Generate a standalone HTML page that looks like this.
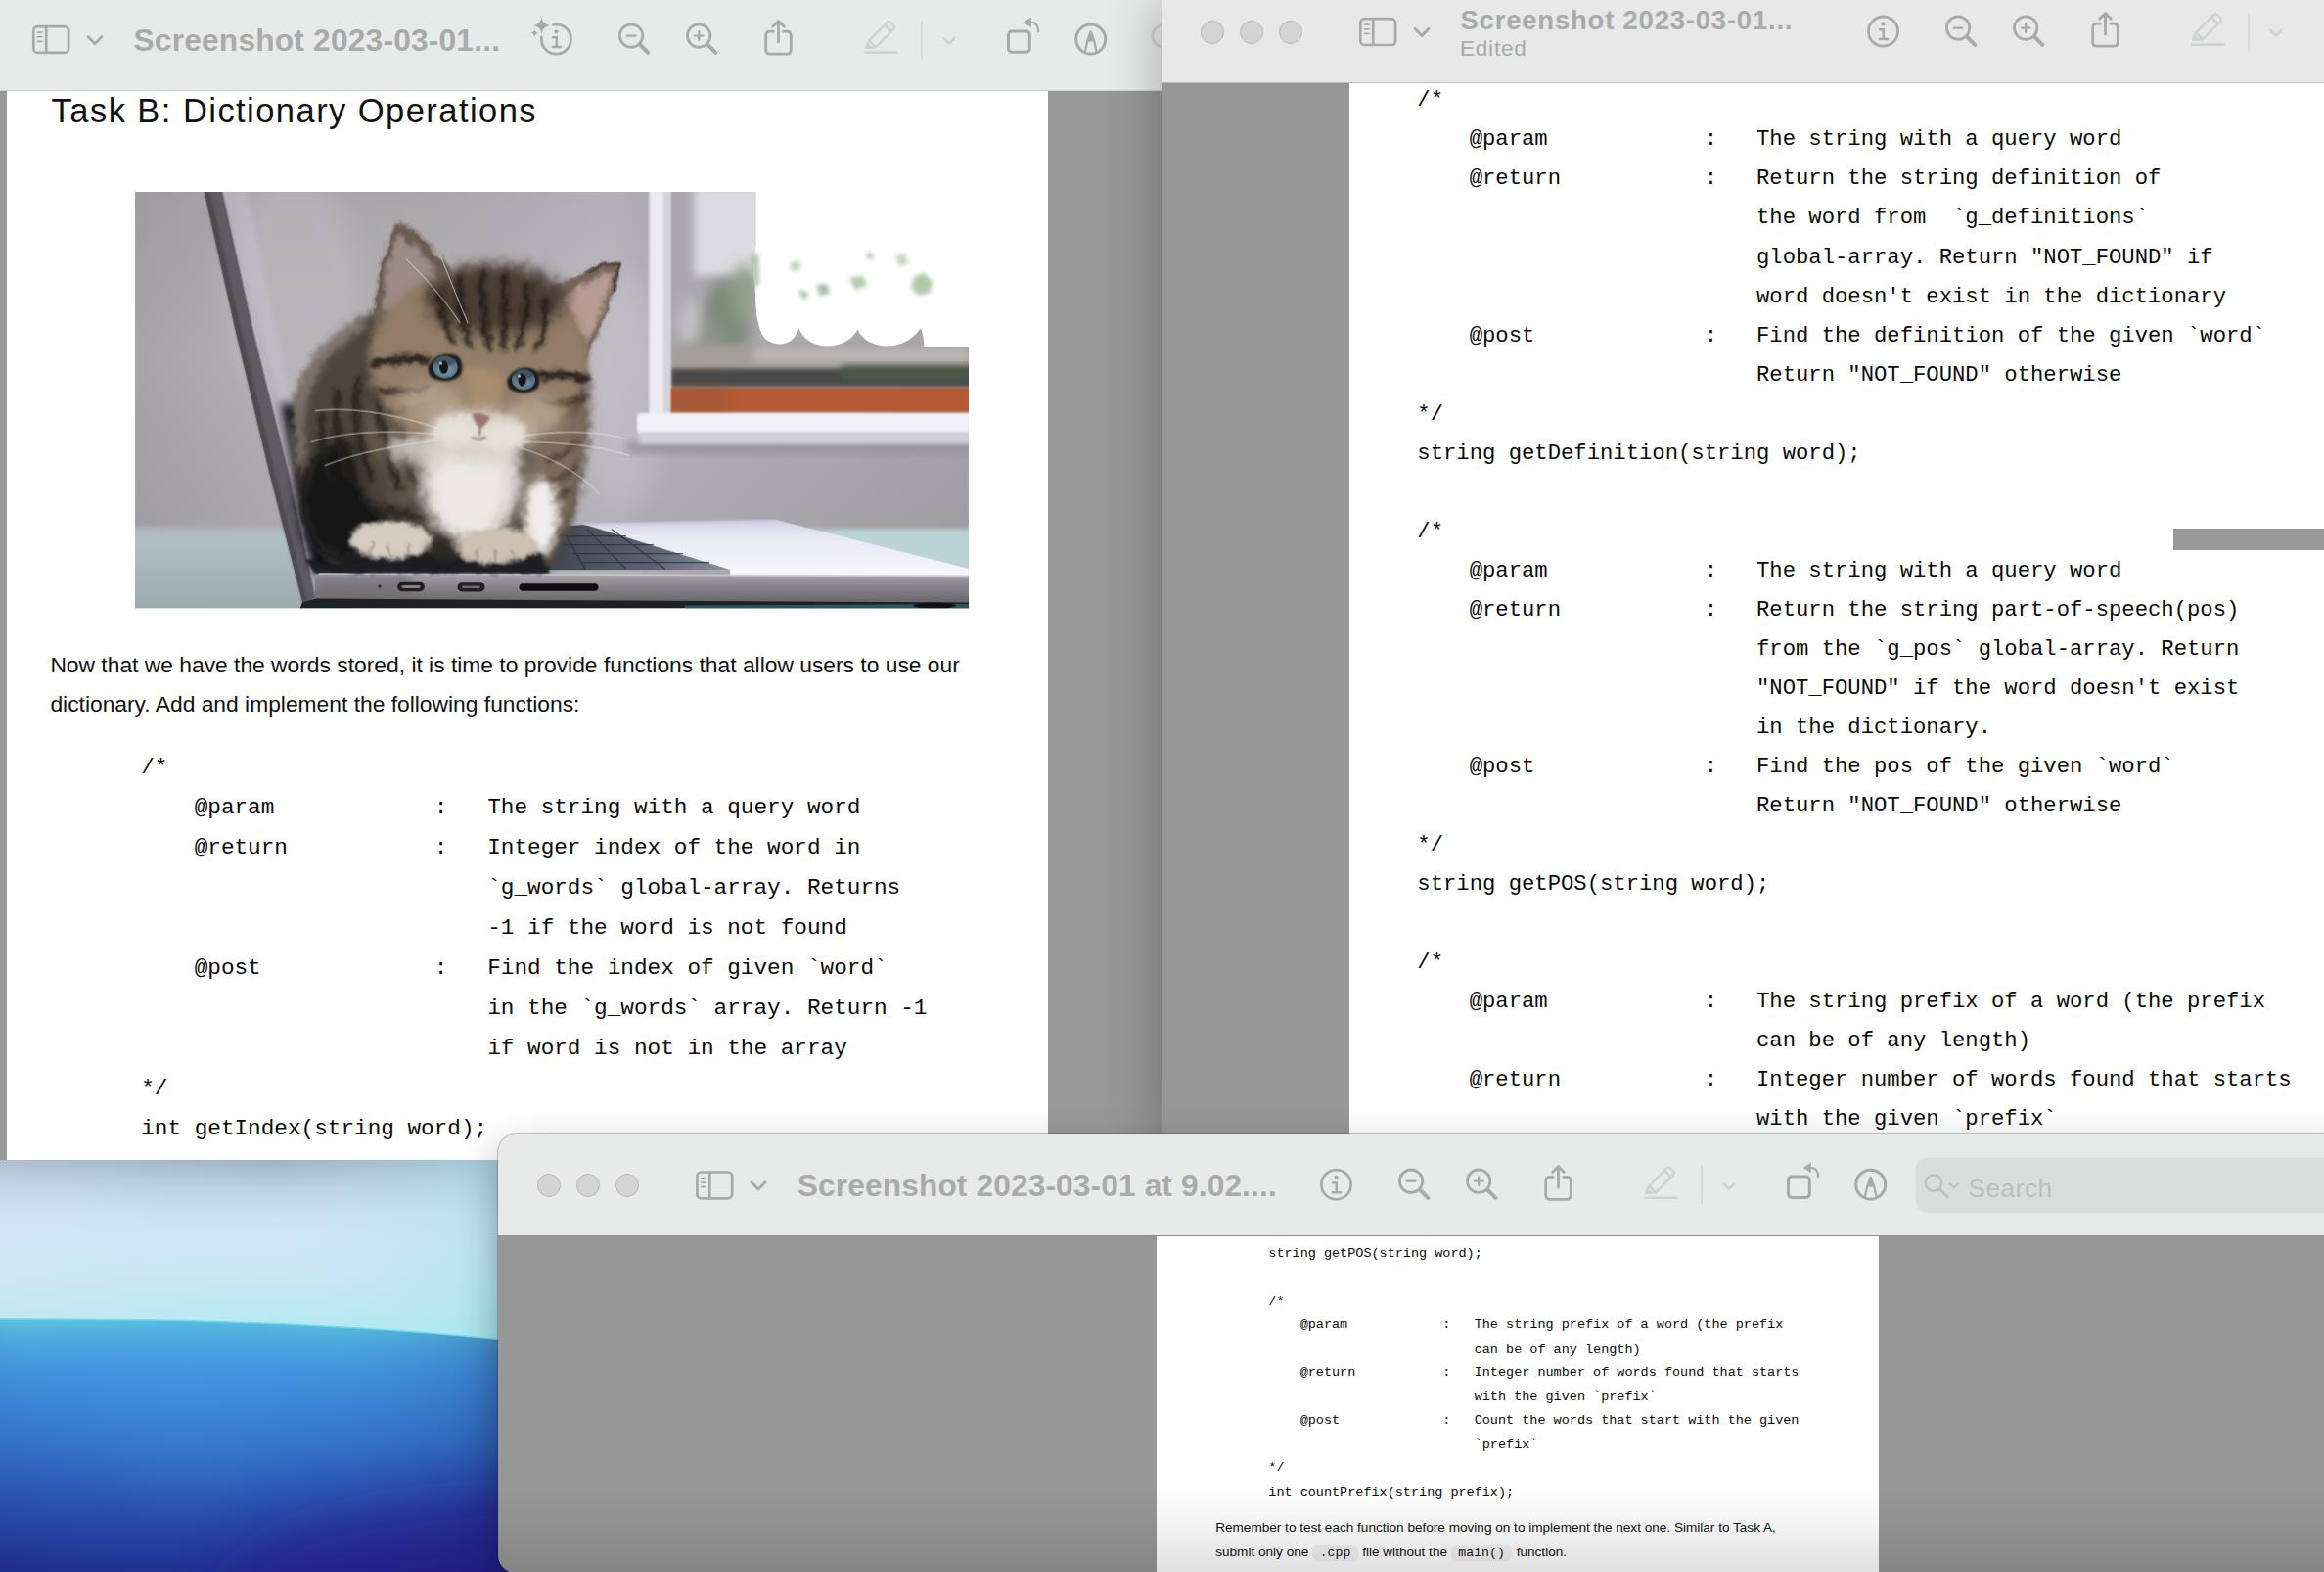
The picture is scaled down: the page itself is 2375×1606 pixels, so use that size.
<!DOCTYPE html>
<html>
<head>
<meta charset="utf-8">
<title>Preview windows</title>
<style>
*{margin:0;padding:0;box-sizing:border-box;}
html,body{width:2375px;height:1606px;overflow:hidden;background:#999;}
body{position:relative;font-family:"Liberation Sans",sans-serif;}
.abs{position:absolute;}
/* ---------- wallpaper ---------- */
#wall{left:0;top:1185px;width:520px;height:421px;overflow:hidden;}
/* ---------- windows ---------- */
.win{position:absolute;overflow:hidden;}
.tb{position:absolute;left:0;top:0;right:0;}
.ttl{position:absolute;white-space:nowrap;font-weight:bold;color:#a9abaa;}
pre.code{position:absolute;font-family:"Liberation Mono",monospace;color:#0a0a0a;white-space:pre;}
.para{position:absolute;color:#111;white-space:nowrap;}
svg.ic{position:absolute;overflow:visible;}
/* window 1 */
#w1{left:0;top:0;width:1200px;height:1185px;background:#989898;}
#w1 .tb{height:93px;background:#e8eae9;border-bottom:1px solid #cfd1d0;}
#w1 .page{position:absolute;left:7px;top:93px;width:1064px;height:1092px;background:#fff;}
#w1 pre.code{font-size:22.7px;line-height:40.9px;}
/* window 2 */
#w2{left:1187px;top:0;width:1188px;height:1165px;background:#979797;box-shadow:0 0 52px 0 rgba(0,0,0,.30);}
#w2 .tb{height:85px;background:#e8e8e8;border-bottom:1.5px solid #bdbdbd;}
#w2 .page{position:absolute;left:192px;top:85px;right:0;bottom:0;background:#fff;}
#w2 pre.code{font-size:22.23px;line-height:40.03px;}
/* window 3 */
#w3{left:509px;top:1159px;width:1900px;height:448px;background:#979797;border-radius:18px;
  box-shadow:0 0 0 1px rgba(0,0,0,.20),0 16px 42px 0 rgba(0,0,0,.32);}
#w3 .tb{height:104px;background:#e8eae9;border-bottom:1.5px solid #8e8e8e;}
#w3 .page{position:absolute;left:673px;top:104px;width:738px;bottom:0;background:#fff;}
#w3 pre.code{font-size:13.49px;line-height:24.35px;}
.kbd{font-family:"Liberation Mono",monospace;font-size:13.2px;background:#f3f3f3;border-radius:5px;padding:1px 7.6px;margin:0 .5px 0 0;}
.tl{position:absolute;width:24px;height:24px;border-radius:50%;background:#d3d4d3;border:1px solid #b7b8b7;}
</style>
</head>
<body>


<svg width="0" height="0" style="position:absolute;left:0;top:0">
<defs>
  <!-- sidebar toggle, centred on 0,0 -->
  <g id="i-side" fill="none" stroke="#a8aaa9" stroke-width="2.7" stroke-linecap="round">
    <rect x="-17.9" y="-13.4" width="35.8" height="26.8" rx="4.2"/>
    <line x1="-5" y1="-13.4" x2="-5" y2="13.4" stroke-linecap="butt"/>
    <g stroke-width="1.7"><line x1="-13.6" y1="-7.4" x2="-9.2" y2="-7.4"/><line x1="-13.6" y1="-2.8" x2="-9.2" y2="-2.8"/><line x1="-13.6" y1="1.8" x2="-9.2" y2="1.8"/></g>
  </g>
  <path id="i-chev" d="M-6.9,-3.4 L0,3.6 L6.9,-3.4" fill="none" stroke-width="3" stroke-linecap="round" stroke-linejoin="round"/>
  <!-- the letter i used inside info circle -->
  <g id="i-i" stroke="#a8aaa9" fill="none" stroke-width="2.5" stroke-linecap="round">
    <circle cx="0" cy="-7.7" r="2.1" fill="#a8aaa9" stroke="none"/>
    <path d="M-3.4,-1.8 L0.3,-1.8 L0.3,7.8 M-3.8,8 L4.6,8"/>
  </g>
  <!-- plain info -->
  <g id="i-info"><circle r="15.1" fill="none" stroke="#a8aaa9" stroke-width="2.8"/><use href="#i-i"/></g>
  <!-- info with sparkles (open arc) -->
  <g id="i-infos">
    <path d="M-3.2,-14.8 A15.1,15.1 0 1 1 -15,-2.2" fill="none" stroke="#a8aaa9" stroke-width="2.8" stroke-linecap="round"/>
    <use href="#i-i"/>
    <path d="M-15,-22.9 Q-14,-15.3 -6.3,-14.2 Q-14,-13.2 -15,-5.6 Q-16,-13.2 -23.6,-14.2 Q-16,-15.3 -15,-22.9Z" fill="#a8aaa9"/>
    <path d="M-22.1,-10.6 Q-21.6,-6.9 -17.9,-6.4 Q-21.6,-5.9 -22.1,-2.2 Q-22.6,-5.9 -26.3,-6.4 Q-22.6,-6.9 -22.1,-10.6Z" fill="#a8aaa9"/>
  </g>
  <!-- magnifier minus / plus, centred on lens -->
  <g id="i-mag" fill="none" stroke="#a8aaa9" stroke-linecap="round">
    <circle r="11.7" stroke-width="2.8"/>
    <line x1="9" y1="9" x2="17.2" y2="17.2" stroke-width="4"/>
    <line x1="-4.4" y1="0" x2="4.4" y2="0" stroke-width="2.3"/>
  </g>
  <g id="i-magp"><use href="#i-mag"/><line x1="0" y1="-4.4" x2="0" y2="4.4" stroke="#a8aaa9" stroke-width="2.3" stroke-linecap="round"/></g>
  <!-- share: origin = arrow x, box centre y -->
  <g id="i-share" fill="none" stroke="#a8aaa9" stroke-width="2.8" stroke-linecap="round" stroke-linejoin="round">
    <path d="M-5.2,-11.5 L-8.6,-11.5 Q-12.8,-11.5 -12.8,-7.3 L-12.8,7.3 Q-12.8,11.5 -8.6,11.5 L8.6,11.5 Q12.8,11.5 12.8,7.3 L12.8,-7.3 Q12.8,-11.5 8.6,-11.5 L5.2,-11.5"/>
    <path d="M0,-0.8 L0,-21.6 M-5.8,-16.4 L0,-22.2 L5.8,-16.4"/>
  </g>
  <!-- highlighter pencil (light) : origin = underline centre -->
  <g id="i-pen" fill="none" stroke="#d0d2d1" stroke-width="2.4" stroke-linecap="round" stroke-linejoin="round">
    <line x1="-16" y1="0" x2="16" y2="0" stroke-width="2.6"/>
    <path d="M-11.9,-12.1 L6.2,-30.4 Q8,-32.2 9.8,-30.4 L13,-27.2 Q14.8,-25.4 13,-23.6 L-5.1,-5.4 Z"/>
    <path d="M-11.9,-12.1 L-14.8,-4.9 L-5.1,-5.4"/>
    <path d="M3.9,-28 L10.7,-21.2"/>
    <path d="M-15.2,-4.8 L-13.6,-8.6 L-10.4,-5.4Z" fill="#d0d2d1"/>
  </g>
  <!-- rotate : origin = square centre -->
  <g id="i-rot" fill="none" stroke="#a8aaa9" stroke-linecap="round" stroke-linejoin="round">
    <rect x="-10.9" y="-10.6" width="21.8" height="21.3" rx="3.6" stroke-width="3"/>
    <path d="M19.7,-10.4 Q19.7,-19.9 11.7,-19.9" stroke-width="2.2"/>
    <path d="M5.5,-20 L11.9,-24.4 L11.9,-15.6Z" fill="#a8aaa9" stroke-width="1"/>
  </g>
  <!-- markup -->
  <g id="i-mark" fill="none" stroke="#a8aaa9" stroke-linecap="round" stroke-linejoin="round">
    <circle r="15" stroke-width="3"/>
    <path d="M-5.9,12.6 L-3.4,1.6 L0,-7.4 L3.4,1.6 L5.9,12.6" stroke-width="2.3"/>
    <path d="M0,-7.8 L3.8,1.9 L-3.8,1.9Z" fill="#a8aaa9" stroke-width="1"/>
  </g>
  <!-- right-hand cluster of icons relative to info centre -->
  <g id="grp-a">
    <use href="#i-mag" x="76.6" y="-3.5"/>
    <use href="#i-magp" x="145.7" y="-3.5"/>
    <use href="#i-share" x="227" y="3.6"/>
    <use href="#i-pen" x="331.6" y="13.5"/>
    <line x1="373.4" y1="-19" x2="373.4" y2="20.6" stroke="#d4d6d5" stroke-width="1.6"/>
    <path d="M396,-1 L401.4,4.4 L406.8,-1" fill="none" stroke="#cfd1d0" stroke-width="2.6" stroke-linecap="round" stroke-linejoin="round"/>
  </g>
  <g id="grp-b">
    <use href="#i-rot" x="472.9" y="2.5"/>
    <use href="#i-mark" x="546.2" y="0"/>
  </g>
</defs>
</svg>

<!-- WALLPAPER -->
<div id="wall" class="abs">
<svg width="520" height="421" viewBox="0 1185 520 421" style="position:absolute;left:0;top:0">
  <defs>
    <linearGradient id="g-sky" gradientUnits="userSpaceOnUse" x1="0" y1="1185" x2="0" y2="1370">
      <stop offset="0" stop-color="#9db1c2"/><stop offset=".05" stop-color="#a9bdce"/><stop offset=".16" stop-color="#bbd1e4"/>
      <stop offset=".30" stop-color="#cbe1f3"/><stop offset=".45" stop-color="#cfe6f7"/><stop offset=".65" stop-color="#c8e7f3"/>
      <stop offset=".85" stop-color="#bce9f2"/><stop offset="1" stop-color="#aeeaf2"/>
    </linearGradient>
    <linearGradient id="g-sea" gradientUnits="userSpaceOnUse" x1="0" y1="1347" x2="0" y2="1606">
      <stop offset="0" stop-color="#5fcde3"/><stop offset=".035" stop-color="#57bddb"/><stop offset=".11" stop-color="#4aa5dc"/>
      <stop offset=".21" stop-color="#4092dc"/><stop offset=".33" stop-color="#3a83d2"/><stop offset=".48" stop-color="#3370c6"/>
      <stop offset=".63" stop-color="#2b59b5"/><stop offset=".78" stop-color="#2443a2"/><stop offset=".90" stop-color="#1f3394"/>
      <stop offset="1" stop-color="#1b2689"/>
    </linearGradient>
    <filter id="wb" x="-50%" y="-50%" width="200%" height="200%"><feGaussianBlur stdDeviation="28"/></filter>
    <radialGradient id="g-glow" gradientUnits="userSpaceOnUse" cx="190" cy="1400" r="330">
      <stop offset="0" stop-color="#4a9cea" stop-opacity=".35"/><stop offset=".5" stop-color="#4a9cea" stop-opacity=".1"/><stop offset="1" stop-color="#182070" stop-opacity=".22"/>
    </radialGradient>
    <linearGradient id="g-skyx" gradientUnits="userSpaceOnUse" x1="0" y1="0" x2="520" y2="0">
      <stop offset="0" stop-color="#dfe6f6" stop-opacity=".25"/><stop offset=".55" stop-color="#c8e8f2" stop-opacity="0"/><stop offset="1" stop-color="#a2e0ee" stop-opacity=".55"/>
    </linearGradient>
  </defs>
  <rect x="0" y="1185" width="520" height="200" fill="url(#g-sky)"/>
  <rect x="0" y="1185" width="520" height="200" fill="url(#g-skyx)"/>
  <path id="seapath" d="M0,1348 C150,1347.5 330,1350 520,1369.5 L520,1606 L0,1606Z" fill="url(#g-sea)"/>
  <path d="M0,1348 C150,1347.5 330,1350 520,1369.5 L520,1606 L0,1606Z" fill="url(#g-glow)"/>
  <path d="M0,1348 C150,1347.5 330,1350 520,1369.5" fill="none" stroke="#6fdcec" stroke-width="1.6"/>
  <ellipse cx="530" cy="1625" rx="300" ry="95" fill="#2a1886" opacity=".5" filter="url(#wb)"/>
</svg>
</div>

<!-- WINDOW 1 -->
<div id="w1" class="win">
  <div class="page" id="p1"></div>
  <!--KIT-START--><svg id="kit" class="abs" style="left:138px;top:196.4px" width="852" height="425.2" viewBox="138 196.4 852 425.2">
<defs>
  <filter id="b1" x="-20%" y="-20%" width="140%" height="140%"><feGaussianBlur stdDeviation="1.2"/></filter>
  <filter id="b2" x="-20%" y="-20%" width="140%" height="140%"><feGaussianBlur stdDeviation="2.2"/></filter>
  <filter id="b4" x="-30%" y="-30%" width="160%" height="160%"><feGaussianBlur stdDeviation="4"/></filter>
  <filter id="b7" x="-40%" y="-40%" width="180%" height="180%"><feGaussianBlur stdDeviation="7"/></filter>
  <filter id="b12" x="-50%" y="-50%" width="200%" height="200%"><feGaussianBlur stdDeviation="12"/></filter>
  <linearGradient id="k-wall" gradientUnits="userSpaceOnUse" x1="138" y1="0" x2="990" y2="0">
    <stop offset="0" stop-color="#a5a2a5"/><stop offset=".16" stop-color="#b0adb1"/><stop offset=".36" stop-color="#b1aeb2"/>
    <stop offset=".57" stop-color="#bab7bd"/><stop offset=".62" stop-color="#b2afb5"/><stop offset="1" stop-color="#a4a1a7"/>
  </linearGradient>
  <linearGradient id="k-wallv" gradientUnits="userSpaceOnUse" x1="0" y1="196" x2="0" y2="540">
    <stop offset="0" stop-color="#000" stop-opacity=".04"/><stop offset=".5" stop-color="#fff" stop-opacity=".03"/><stop offset="1" stop-color="#000" stop-opacity=".03"/>
  </linearGradient>
  <linearGradient id="k-tab" gradientUnits="userSpaceOnUse" x1="0" y1="536" x2="0" y2="622">
    <stop offset="0" stop-color="#a8adae"/><stop offset=".14" stop-color="#b2bfc0"/><stop offset=".35" stop-color="#aebbbc"/>
    <stop offset=".7" stop-color="#a5b2b2"/><stop offset="1" stop-color="#9eabab"/>
  </linearGradient>
  <linearGradient id="k-lid" gradientUnits="userSpaceOnUse" x1="208" y1="0" x2="228" y2="-5">
    <stop offset="0" stop-color="#4b484c"/><stop offset=".5" stop-color="#67646a"/><stop offset="1" stop-color="#716e74"/>
  </linearGradient>
  <linearGradient id="k-side" gradientUnits="userSpaceOnUse" x1="0" y1="588" x2="0" y2="616">
    <stop offset="0" stop-color="#a5a2a8"/><stop offset=".35" stop-color="#8b888e"/><stop offset="1" stop-color="#68656b"/>
  </linearGradient>
  <linearGradient id="k-kbd" gradientUnits="userSpaceOnUse" x1="540" y1="0" x2="745" y2="0">
    <stop offset="0" stop-color="#3c404a"/><stop offset=".6" stop-color="#5b6170"/><stop offset="1" stop-color="#8a91a2"/>
  </linearGradient>
  <linearGradient id="k-palm" gradientUnits="userSpaceOnUse" x1="0" y1="531" x2="0" y2="590">
    <stop offset="0" stop-color="#cdcddf"/><stop offset=".3" stop-color="#e9e9f4"/><stop offset="1" stop-color="#f7f7fc"/>
  </linearGradient>
  <filter id="fur" x="-10%" y="-10%" width="120%" height="120%"><feTurbulence type="fractalNoise" baseFrequency="0.09" numOctaves="2" seed="4" result="n"/><feDisplacementMap in="SourceGraphic" in2="n" scale="9" xChannelSelector="R" yChannelSelector="G"/></filter>
  <clipPath id="k-clip"><rect x="138" y="196.4" width="852" height="425.2"/></clipPath>
</defs>
<g clip-path="url(#k-clip)">
  <!-- wall -->
  <rect x="138" y="196" width="852" height="426" fill="url(#k-wall)"/>
  <rect x="138" y="196" width="852" height="426" fill="url(#k-wallv)"/>
  <ellipse cx="300" cy="300" rx="70" ry="120" fill="#bebbc0" opacity=".55" filter="url(#b12)"/>
  <ellipse cx="640" cy="400" rx="40" ry="120" fill="#c4c1c7" opacity=".5" filter="url(#b12)"/>
  <!-- table (left) -->
  <rect x="130" y="538" width="230" height="90" fill="url(#k-tab)" filter="url(#b2)"/>
  <!-- table (right) -->
  <path d="M800,541 L1000,541 L1000,592 L860,560Z" fill="#b9d3d7" filter="url(#b2)"/>

  <!-- window -->
  <g>
    <rect x="684" y="190" width="92" height="234" fill="#aaa7ae"/>
    <rect x="709" y="190" width="70" height="92" fill="#dcdce0" filter="url(#b4)"/>
    <g filter="url(#b7)">
      <ellipse cx="742" cy="330" rx="24" ry="44" fill="#7d8a79"/>
      <ellipse cx="722" cy="352" rx="18" ry="28" fill="#8a9488"/>
      <ellipse cx="760" cy="300" rx="12" ry="30" fill="#8fa08a"/>
      <ellipse cx="705" cy="330" rx="10" ry="24" fill="#c3c2c6"/>
    </g>
    <rect x="684" y="352" width="310" height="28" fill="#a49e9b" filter="url(#b4)"/>
    <rect x="770" y="356" width="220" height="14" fill="#bdb8b8" filter="url(#b4)"/>
    <rect x="686" y="377" width="310" height="19" fill="#4a4a48" filter="url(#b2)"/>
    <rect x="860" y="374" width="140" height="14" fill="#4c5a49" filter="url(#b4)"/>
    <rect x="684" y="396.5" width="310" height="25" fill="#b55a32" filter="url(#b1)"/>
    <rect x="684" y="396.5" width="60" height="25" fill="#9a5a40" opacity=".5" filter="url(#b4)"/>
    <!-- frame post -->
    <rect x="663.4" y="190" width="21.4" height="236" fill="#ebeaf0" filter="url(#b1)"/>
    <rect x="678" y="190" width="7" height="232" fill="#d4d2da" filter="url(#b1)"/>
    <!-- sill -->
    <rect x="640" y="452" width="360" height="12" fill="#99969d" filter="url(#b4)"/>
    <rect x="651" y="422.3" width="345" height="21" rx="4" fill="#f1f0f5" filter="url(#b1)"/>
    <rect x="653" y="442" width="343" height="12" rx="3" fill="#d3d1d8" filter="url(#b2)"/>
  </g>

  <!-- laptop lid -->
  <path d="M226.6,194 L252,194 L300,420 L290,424 Z" fill="#c3c0c8" opacity=".55" filter="url(#b2)"/>
  <path d="M208.2,194 L226.8,194 L260.2,344 L295.1,484 L322.5,611 L309.5,617 L275.5,484 L242,344Z" fill="#5f5c61"/>
  <path d="M208.2,194 L214,194 L248,344 L281,484 L314,615 L309.5,617 L275.5,484 L242,344Z" fill="#4a474b" opacity=".8" filter="url(#b1)"/>
  <path d="M226.8,194 L260.2,344 L295.1,484 L322.5,611" fill="none" stroke="#8b888f" stroke-width="1.2" opacity=".8"/>

  <!-- dark screen / shadow behind kitten -->
  <path d="M287,412 L318,418 L350,470 L395,548 L405,580 L330,590 L318,582 Z" fill="#14161c" filter="url(#b4)"/>

  <!-- laptop base -->
  <path d="M540,541 L597,536.5 L746,582.5 L330,583 L318,576 L420,572 Z" fill="url(#k-kbd)"/>
  <path d="M312,572 L556,572 L562,586 L322,586Z" fill="#1b1b21" filter="url(#b1)"/>
  <path d="M597,535.5 L793,531.5 L992,582 L992,590 L746,590 L746,582.5Z" fill="url(#k-palm)"/>
  <path d="M597,536 L793,532" stroke="#c4c4d8" stroke-width="2" filter="url(#b1)"/>
  <g stroke="#2a2d36" stroke-width="1.3" opacity=".75">
    <path d="M566,548 L640,548 M575,557 L668,557 M585,566 L698,566 M596,575 L725,575"/>
    <path d="M600,541 L640,582 M625,541 L680,582 M575,541 L598,582"/>
  </g>
  <path d="M322,587 L992,589.5 L992,617 L322,613Z" fill="url(#k-side)"/>
  <path d="M322,587 L420,587 L420,614 L322,613Z" fill="#6f6c71" opacity=".55" filter="url(#b4)"/>
  <path d="M326,586.5 L992,588.8" stroke="#c9c7cf" stroke-width="1.6" opacity=".9"/>
  <path d="M309,616 L322,612 L992,616 L992,623 L306,623Z" fill="#1c2126"/>
  <path d="M700,619 L992,617.5 L992,623 L700,623Z" fill="#2c6468" opacity=".8"/>
  <ellipse cx="955" cy="619" rx="22" ry="3" fill="#101418"/>
  <!-- ports -->
  <circle cx="388" cy="599.3" r="1.5" fill="#1d1d22"/>
  <rect x="406" y="595.2" width="28" height="9.4" rx="4.7" fill="#1f1f25"/><rect x="410.5" y="598.5" width="19" height="2.8" rx="1.4" fill="#8d7f78"/>
  <rect x="467.5" y="595.6" width="28" height="9.2" rx="4.6" fill="#1f1f25"/><rect x="472" y="598.8" width="19" height="2.6" rx="1.3" fill="#6e6a70"/>
  <rect x="530.5" y="596.6" width="81" height="7.6" rx="3.8" fill="#0e0e12"/>

  <!-- white blown-out window + flowers -->
  <path d="M772.7,194 L992,194 L992,355 L944.5,355 C944,346 943,339 940.5,336 C932,349 918,354 907,354 C891,354 880,346 876.5,337 C870,349 857,354 845.5,354 C831,354 820,346 816.5,336 C812,347 806,352 798,352 C785,352 778.5,345 776,334 C771,320 773,300 770.5,282 C768.5,264 774,252 772.7,246Z" fill="#fff"/>
  <g filter="url(#b2)" opacity=".8">
    <path d="M806,270 L816,266 L819,274 L811,279Z" fill="#b5ccb0"/><path d="M834,292 L845,290 L848,300 L838,303Z" fill="#8fb092"/>
    <path d="M868,284 L882,282 L886,292 L874,297Z" fill="#a3bf9a"/><path d="M916,261 L925,259 L928,270 L918,273Z" fill="#b7cfb0"/>
    <path d="M934,284 L944,279 L953,288 L950,300 L938,302 L931,294Z" fill="#9dbb92"/><path d="M816,296 L826,300 L822,308Z" fill="#82a58a"/>
    <path d="M884,262 L890,258 L893,266Z" fill="#8cab8e"/>
    <path d="M768,262 L775,258 L776,290 L770,296Z" fill="#9fb59c"/>
  </g>

  <!-- ================= KITTEN ================= -->
  <g id="cat"><g filter="url(#fur)">
    <!-- body -->
    <path d="M381,320 C350,333 318,362 305,398 C295,430 300,470 312,520 C320,560 335,578 362,580 L562,580 C582,560 594,500 599,440 C601,400 601,380 596,368 Z" fill="#4e443c" filter="url(#b4)"/>
    <path d="M372,330 C345,345 322,370 310,405 C303,430 304,455 310,480" fill="none" stroke="#9c9086" stroke-width="9" opacity=".75" filter="url(#b4)"/>
    <ellipse cx="352" cy="512" rx="46" ry="62" fill="#121318" filter="url(#b7)"/>
    <ellipse cx="400" cy="465" rx="38" ry="58" fill="#695c50" opacity=".65" filter="url(#b7)"/>
    <g fill="none" stroke="#26201c" stroke-width="6.5" stroke-linecap="round" opacity=".85" filter="url(#b2)">
      <path d="M345,400 C340,430 345,460 356,490"/><path d="M366,388 C360,420 366,455 380,490"/>
      <path d="M388,392 C384,425 392,460 408,500"/><path d="M330,425 C326,445 330,470 338,490"/>
      <path d="M410,440 C412,470 425,500 440,520"/><path d="M395,520 C420,528 440,530 455,528"/>
    </g>
    <!-- right flank under cheek -->
    <path d="M545,430 C575,430 598,420 600,400 C603,450 590,520 565,560 L530,560 Z" fill="#7b6a5b" filter="url(#b4)"/>
    <g fill="none" stroke="#3b3029" stroke-width="5" stroke-linecap="round" opacity=".7" filter="url(#b2)">
      <path d="M560,470 C572,468 582,462 590,452"/><path d="M555,492 C568,492 580,486 588,476"/><path d="M552,515 C562,516 574,510 582,500"/>
    </g>
    <!-- chest + white leg -->
    <ellipse cx="481" cy="492" rx="52" ry="62" fill="#e2ddd8" filter="url(#b7)"/>
    <ellipse cx="478" cy="500" rx="34" ry="46" fill="#ece8e4" filter="url(#b4)"/>
    <ellipse cx="553" cy="528" rx="17" ry="40" fill="#f1eeea" filter="url(#b4)"/>
    <ellipse cx="428" cy="458" rx="34" ry="16" fill="#d8d2cb" opacity=".85" filter="url(#b7)"/>
    <!-- ears -->
    <path d="M380,324 C384,282 394,242 406,226 C426,232 449,258 461,277 L432,332Z" fill="#6b5c53" filter="url(#b1)"/>
    <path d="M391,316 C393,282 401,252 408,239 C424,250 440,268 448,283 L424,326Z" fill="#9d8b88" filter="url(#b2)"/>
    <path d="M381,322 C385,282 395,243 406,227 C420,232 440,250 452,266" fill="none" stroke="#d9d2cc" stroke-width="1.6" opacity=".8" filter="url(#b1)"/>
    <path d="M556,300 C585,281 614,271 632,270 C629,300 613,340 598,370 L568,342Z" fill="#75655a" filter="url(#b1)"/>
    <path d="M574,307 C594,291 614,281 626,279 C622,302 611,330 600,352Z" fill="#b89c93" filter="url(#b2)"/>
    <path d="M600,278 C612,272 624,270 632,270 C631,280 629,290 626,298" fill="none" stroke="#3a302b" stroke-width="3" filter="url(#b1)"/>
    <!-- head -->
    <ellipse cx="489" cy="368" rx="112" ry="93" fill="#917d67" filter="url(#b4)"/>
    <ellipse cx="506" cy="306" rx="72" ry="36" fill="#4a3e34" filter="url(#b7)"/>
    <g fill="none" stroke="#241d19" stroke-width="6" stroke-linecap="round" opacity=".85" filter="url(#b2)">
      <path d="M470,285 C468,305 472,330 480,352"/><path d="M492,280 C492,305 496,330 500,356"/>
      <path d="M515,284 C516,305 516,330 514,356"/><path d="M538,292 C540,312 536,335 528,356"/>
      <path d="M450,300 C450,318 456,338 464,350"/><path d="M556,306 C560,322 556,342 548,358"/>
    </g>
    <!-- cheek stripes -->
    <g fill="none" stroke="#2b231f" stroke-linecap="round" filter="url(#b2)">
      <path d="M382,372 C398,368 418,366 436,368" stroke-width="8"/>
      <path d="M388,398 C404,402 420,402 436,396" stroke-width="6" opacity=".8"/>
      <path d="M396,420 C410,422 424,420 436,414" stroke-width="4" opacity=".6"/>
      <path d="M552,384 C566,382 584,384 600,388" stroke-width="8"/>
      <path d="M556,412 C570,414 584,412 596,406" stroke-width="5" opacity=".7"/>
    </g>
    <!-- light areas of face -->
    <ellipse cx="440" cy="412" rx="34" ry="22" fill="#b7a58f" opacity=".8" filter="url(#b7)"/>
    <ellipse cx="548" cy="424" rx="28" ry="20" fill="#b7a58f" opacity=".8" filter="url(#b7)"/>
    <path d="M474,372 L516,382 L508,428 L480,424Z" fill="#a88d6e" filter="url(#b4)"/>
    <ellipse cx="489" cy="446" rx="54" ry="26" fill="#ddd6cd" filter="url(#b7)"/>
    <ellipse cx="466" cy="440" rx="23" ry="16" fill="#e6e0d9" filter="url(#b4)"/>
    <ellipse cx="514" cy="446" rx="23" ry="16" fill="#e6e0d9" filter="url(#b4)"/>
    </g>
    <!-- eyes -->
    <g>
      <path d="M437,376 C442,364 456,359 467,364 C473,368 474,378 470,384 C462,392 446,391 439,384Z" fill="#1f1b1a" filter="url(#b1)"/>
      <ellipse cx="455" cy="375.5" rx="12.6" ry="11.2" fill="#5d7a8b"/>
      <ellipse cx="455" cy="369" rx="12" ry="5" fill="#2c3a44" opacity=".55" filter="url(#b1)"/>
      <ellipse cx="455" cy="379" rx="9" ry="5" fill="#8aa7b6" opacity=".45" filter="url(#b1)"/>
      <ellipse cx="453.5" cy="375.5" rx="4.4" ry="6.8" fill="#15161a"/>
      <circle cx="450.5" cy="371.5" r="1.6" fill="#dfe8ee" opacity=".8"/>
      <path d="M518,390 C522,378 535,373 546,378 C552,382 553,391 549,397 C541,404 527,403 520,397Z" fill="#1f1b1a" filter="url(#b1)"/>
      <ellipse cx="535" cy="388.5" rx="12" ry="10.4" fill="#587484"/>
      <ellipse cx="535" cy="382.5" rx="11.5" ry="4.6" fill="#2c3a44" opacity=".55" filter="url(#b1)"/>
      <ellipse cx="535" cy="392" rx="8.5" ry="4.6" fill="#86a3b2" opacity=".45" filter="url(#b1)"/>
      <ellipse cx="533.5" cy="388.5" rx="4.2" ry="6.4" fill="#15161a"/>
      <circle cx="530.5" cy="384.5" r="1.5" fill="#dfe8ee" opacity=".8"/>
    </g>
    <!-- nose & mouth -->
    <path d="M482.5,423 C488,421 496,423 501,426.5 C498,432 494,437 490.5,438 C487,435 484,429 482.5,423Z" fill="#9a7871" filter="url(#b1)"/>
    <path d="M490.5,438 L490,445 M483,447 C486,450 492,450 496,447" fill="none" stroke="#6b5650" stroke-width="1.6" stroke-linecap="round" filter="url(#b1)"/>
    <g filter="url(#fur)">
    <!-- paws -->
    <path d="M350,566 L552,566 L560,584 L350,584Z" fill="#1d1d24" filter="url(#b2)"/>
    <ellipse cx="399" cy="552" rx="42" ry="19" fill="#d6ccc1" filter="url(#b2)"/>
    <ellipse cx="506" cy="558" rx="43" ry="18" fill="#cdc1b4" filter="url(#b2)"/>
    <g fill="none" stroke="#8a7a6c" stroke-width="2" stroke-linecap="round" opacity=".7" filter="url(#b1)">
      <path d="M380,556 L378,566 M398,558 L398,568 M416,556 L418,566"/><path d="M488,562 L486,571 M506,563 L506,573 M524,561 L526,570"/>
    </g>
    <ellipse cx="452" cy="562" rx="14" ry="12" fill="#2a2624" filter="url(#b4)"/>
    </g>
    <!-- whiskers -->
    <g fill="none" stroke="#f3f0ec" stroke-width=".9" opacity=".8" stroke-linecap="round">
      <path d="M448,438 C410,425 360,415 322,420"/><path d="M446,444 C405,440 355,440 318,452"/><path d="M448,450 C410,455 365,462 332,476"/>
      <path d="M532,446 C570,440 610,440 641,449"/><path d="M534,452 C572,452 615,456 643,466"/><path d="M532,458 C565,468 595,485 613,506"/>
      <path d="M470,330 C450,300 430,280 415,265"/><path d="M478,330 C465,300 458,280 450,262"/>
    </g>
  </g>
</g>
</svg>
<!--KIT-END-->
  <div class="abs" id="h1" style="left:52.6px;top:91.2px;font-size:34.5px;letter-spacing:1.45px;line-height:44px;color:#111;white-space:nowrap;">Task B: Dictionary Operations</div>
  <div class="para" id="pa1" style="left:51.4px;top:658.5px;font-size:22.82px;line-height:40px;">Now that we have the words stored, it is time to provide functions that allow users to use our<br>dictionary. Add and implement the following functions:</div>
<pre class="code" id="c1" style="left:144.2px;top:764.4px;">/*
    @param            :   The string with a query word
    @return           :   Integer index of the word in
                          `g_words` global-array. Returns
                          -1 if the word is not found
    @post             :   Find the index of given `word`
                          in the `g_words` array. Return -1
                          if word is not in the array
*/
int getIndex(string word);</pre>
  <div class="tb" id="tb1">
    <svg class="ic" style="left:0;top:0" width="1200" height="93">
      <use href="#i-side" x="52.2" y="40.5"/>
      <use href="#i-chev" x="97" y="41.2" stroke="#a8aaa9"/>
      <use href="#i-infos" x="568.5" y="40.1"/>
      <use href="#grp-a" x="568.5" y="40.1"/>
      <use href="#grp-b" x="568.5" y="40.1"/>
      <rect x="1177.8" y="25.6" width="200" height="22.2" rx="11.1" fill="none" stroke="#cfd1d0" stroke-width="2.8"/>
    </svg>
    <div class="ttl" id="t1" style="left:136.5px;top:23px;font-size:31.7px;letter-spacing:.2px;line-height:36px;">Screenshot 2023-03-01...</div>
  </div>
</div>

<!-- WINDOW 2 -->
<div id="w2" class="win">
  <div class="page" id="p2"></div>
<pre class="code" id="c2" style="left:261.3px;top:82.4px;">/*
    @param            :   The string with a query word
    @return           :   Return the string definition of
                          the word from  `g_definitions`
                          global-array. Return "NOT_FOUND" if
                          word doesn't exist in the dictionary
    @post             :   Find the definition of the given `word`
                          Return "NOT_FOUND" otherwise
*/
string getDefinition(string word);

/*
    @param            :   The string with a query word
    @return           :   Return the string part-of-speech(pos)
                          from the `g_pos` global-array. Return
                          "NOT_FOUND" if the word doesn't exist
                          in the dictionary.
    @post             :   Find the pos of the given `word`
                          Return "NOT_FOUND" otherwise
*/
string getPOS(string word);

/*
    @param            :   The string prefix of a word (the prefix
                          can be of any length)
    @return           :   Integer number of words found that starts
                          with the given `prefix`
    @post             :   Count the words that start with the given</pre>
  <div class="abs" style="left:1034px;top:540px;width:160px;height:22px;background:#999;"></div>
  <div class="tb" id="tb2">
    <div class="tl" style="left:40px;top:21px"></div><div class="tl" style="left:80px;top:21px"></div><div class="tl" style="left:120px;top:21px"></div>
    <svg class="ic" style="left:0;top:0" width="1188" height="85">
      <use href="#i-side" x="221.2" y="32.6"/>
      <use href="#i-chev" x="266" y="32.9" stroke="#a8aaa9"/>
      <use href="#i-info" x="737.5" y="32.1"/>
      <use href="#grp-a" x="737.5" y="32.1"/>
    </svg>
    <div class="ttl" id="t2" style="left:305.5px;top:3.4px;font-size:27.5px;letter-spacing:.78px;line-height:36px;">Screenshot 2023-03-01...</div>
    <div class="ttl" id="t2b" style="left:305px;top:36px;font-size:22.5px;font-weight:normal;line-height:28px;letter-spacing:.8px;">Edited</div>
  </div>
</div>

<!-- WINDOW 3 -->
<div id="w3" class="win">
  <div class="page" id="p3"></div>
<pre class="code" id="c3" style="left:787.3px;top:110.25px;">string getPOS(string word);

/*
    @param            :   The string prefix of a word (the prefix
                          can be of any length)
    @return           :   Integer number of words found that starts
                          with the given `prefix`
    @post             :   Count the words that start with the given
                          `prefix`
*/
int countPrefix(string prefix);</pre>
  <div class="para" id="pa3" style="left:733.2px;top:390.1px;font-size:13.58px;line-height:24.4px;">Remember to test each function before moving on to implement the next one. Similar to Task A,<br>submit only one <span class="kbd">.cpp</span> file without the <span class="kbd">main()</span> function.</div>
  <div class="abs" style="left:0;top:356px;width:1900px;height:92px;background:linear-gradient(180deg,rgba(0,0,0,0),rgba(0,0,0,.035) 40%,rgba(0,0,0,.125));"></div>
  <div class="tb" id="tb3">
    <div class="tl" style="left:40px;top:40px"></div><div class="tl" style="left:80px;top:40px"></div><div class="tl" style="left:120px;top:40px"></div>
    <svg class="ic" style="left:0;top:0" width="1900" height="104">
      <use href="#i-side" x="221.3" y="51.9"/>
      <use href="#i-chev" x="266" y="52.4" stroke="#a8aaa9"/>
      <use href="#i-info" x="856.5" y="51.2"/>
      <use href="#grp-a" x="856.5" y="51.2"/>
      <use href="#grp-b" x="856.5" y="51.2"/>
      <rect x="1448.8" y="23.7" width="500" height="56.2" rx="12" fill="#dbdddc"/>
      <g fill="none" stroke="#bcbebd" stroke-linecap="round" stroke-linejoin="round">
        <circle cx="1467" cy="49.6" r="8.3" stroke-width="2.2"/>
        <line x1="1473.2" y1="55.8" x2="1481.5" y2="64" stroke-width="2.6"/>
        <path d="M1483.6,50.4 L1487.8,54.4 L1492,50.4" stroke-width="2"/>
      </g>
    </svg>
    <div class="ttl" id="t3" style="left:305.8px;top:34.3px;font-size:31.65px;letter-spacing:.14px;line-height:36px;">Screenshot 2023-03-01 at 9.02....</div>
    <div class="abs" id="srch" style="left:1502.6px;top:38.5px;font-size:26px;letter-spacing:.6px;line-height:32px;color:#bcbebd;">Search</div>
  </div>
</div>

</body>
</html>
